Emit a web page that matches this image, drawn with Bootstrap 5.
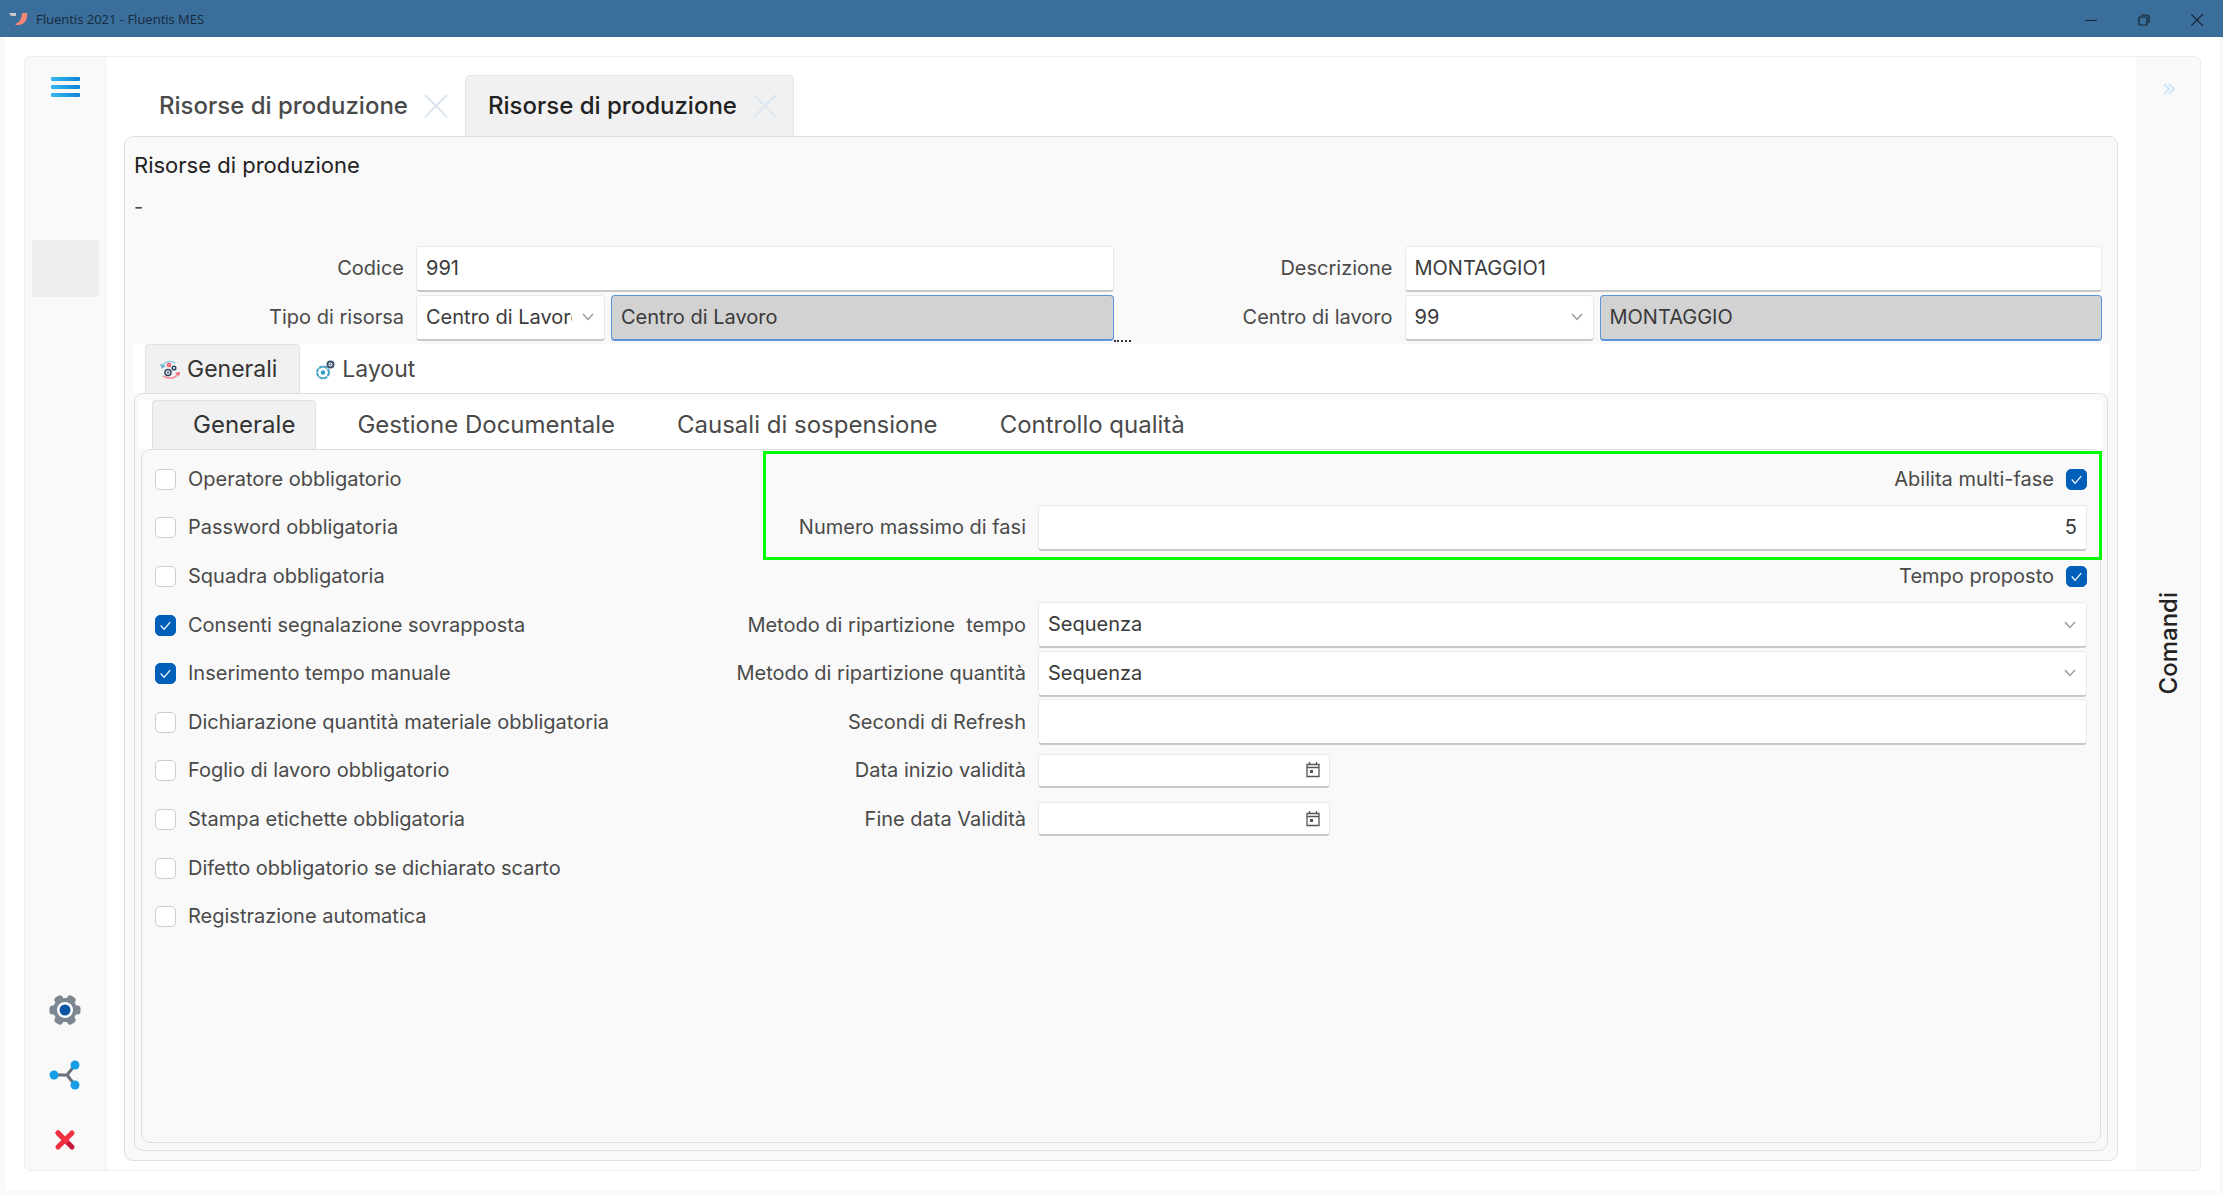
<!DOCTYPE html>
<html lang="it">
<head>
<meta charset="utf-8">
<meta name="viewport" content="width=device-width, initial-scale=1">
<title>Fluentis 2021 - Fluentis MES</title>
<link href="https://cdn.jsdelivr.net/npm/bootstrap@5.3.0/dist/css/bootstrap.min.css" rel="stylesheet">
<style>
body{font-family:Inter,"Noto Sans",sans-serif;font-size:20px;line-height:27px;color:#4a4a4a;background:#f9f9f9}
button,input,select{font:inherit;color:inherit}
.titlebar{height:37px;background:#3a6e9b;color:#172a3c;font:13px/20px "Open Sans",sans-serif;padding-left:9px}
.titlebar button{width:53px;height:37px}
.plain{background:none;border:0;padding:0}
.workspace{background:#fff;margin:0 4px 5px 5px;padding:19px 18px 19px 19px}
.shell{border:1px solid #eee;border-radius:6px;overflow:hidden}
.rail{width:81px;background:#f9f9f9;border-right:1px solid #f0f0f0;padding:18px 0 14px}
.rail-slot{width:67px;height:57px;background:#eee;margin-top:142px}
.rail-btn{height:33px}
.commands{width:64px;background:#f9f9f9;border-left:1px solid #f5f5f5}
.commands-toggle{height:60px}
.commands-label{writing-mode:vertical-rl;transform:rotate(180deg);font-size:24px;line-height:32px;font-weight:500;color:#222}
.content{padding:18px 18px 9px 18px}
.doc-tab{width:329px;height:61px;padding:0 16px 2px 22px;border:1px solid transparent;border-bottom:0;border-radius:5px 5px 0 0;font-size:24px;font-weight:500}
.doc-tab.on{background:#f1f1f1;border-color:#e4e4e4;color:#222}
.pane{border:1px solid #dfdfdf;border-radius:9px;background:#f9f9f9}
.head{height:107px;padding:13px 9px 0}
.head h1{font-size:22px;line-height:30px;font-weight:400;color:#222;margin:0 0 14px}
.head-form{display:grid;grid-template-columns:1fr 1fr;grid-template-rows:1fr 1fr;height:98px;margin:0 15px 2px 0}
.head-form label{flex:0 0 283px;text-align:right}
.head-form .narrow{flex:0 0 189px;margin-right:6px}
.field{height:46px;border:1px solid #e9e9e9;border-bottom:2px solid #c8c8c8;border-radius:4px;background-color:#fff;padding:0 9px;color:#3a3a3a;min-width:0}
select.field{appearance:none;padding-right:32px;background-image:url("data:image/svg+xml,%3Csvg xmlns='http://www.w3.org/2000/svg' width='14' height='14' fill='none' stroke='%23999' stroke-width='1.4'%3E%3Cpath d='M2 4l5 5.500 5-5.500'/%3E%3C/svg%3E");background-repeat:no-repeat;background-position:right 9px center}
.field.locked{background:#d2d2d2;border:1px solid #5c93dd;border-bottom-width:2px}
.dots{right:-17px;bottom:0;width:17px;border-top:2px dotted #333}
.tabstrip{background:#fff;height:49px;padding-left:12px}
.tabstrip button{border:1px solid transparent;border-bottom:0;border-radius:4px 4px 0 0;background:none;height:50px}
.tabstrip button.on{background:#f1f1f1;border-color:#e2e2e2;color:#333}
.outer-tabs button{font-size:23px;padding:0 22px 0 14px;gap:7px}
.inner-tabs{margin-top:6px;padding-left:13px}
.inner-tabs button{font-size:24px;padding:0 20px 2px 40px}
.outer-pane{margin:0 9px 9px}
.inner-pane{margin:0 6px 7px;padding:5px 13px 0 13px}
.opts,.params{display:grid;grid-template-rows:repeat(10,1fr);height:486px}
.opts{width:548px}
.form-check-input{width:21px;height:21px;margin:0;border-color:#ccc;border-radius:4px;flex:none}
.form-check-input:checked{background-color:#005fb8;border-color:#005fb8;background-size:19px;background-image:url("data:image/svg+xml,%3Csvg xmlns='http://www.w3.org/2000/svg' viewBox='0 0 20 20' fill='none' stroke='%23fff' stroke-width='1.300'%3E%3Cpath d='M5 10l3.500 4L15 6.500'/%3E%3C/svg%3E")}
.params .lbl{flex:0 0 327px;text-align:right;white-space:pre}
.callout-frame{left:60px;right:-15px;top:-4px;height:109px;border:3px solid #0f0;pointer-events:none}
.date-box{width:292px;height:34px}
.date-box input{background:none;border:0;outline:0;width:100%}
</style>
<script src="https://cdn.jsdelivr.net/npm/bootstrap@5.3.0/dist/js/bootstrap.bundle.min.js"></script>
</head>
<body class="min-vh-100 d-flex flex-column">
<header class="titlebar d-flex align-items-center">
  <svg width="19" height="18" viewBox="0 0 19 18" class="me-2"><path d="M0 3h7v3H2z" fill="#c7c7cb"/><path d="M13 3h5c1 7-3 13-11 12l-1-1c4-1 7-5 7-11z" fill="#fa8775"/></svg>
  <span class="me-auto">Fluentis 2021 - Fluentis MES</span>
  <button class="plain" aria-label="Riduci"><svg width="12" height="12" stroke="#17222d"><path d="M0 6.500h12"/></svg></button>
  <button class="plain" aria-label="Ripristina"><svg width="12" height="12" fill="none" stroke="#17222d" stroke-width="1.200"><rect x="1" y="3" width="8" height="8" rx="1"/><path d="M3 1h6q2 0 2 2v6"/></svg></button>
  <button class="plain" aria-label="Chiudi"><svg width="12" height="12" stroke="#17222d" stroke-width="1.200"><path d="M0 0l12 12M12 0L0 12"/></svg></button>
</header>
<div class="workspace flex-grow-1 d-flex">
 <div class="shell d-flex flex-grow-1">
  <nav class="rail d-flex flex-column align-items-center flex-shrink-0">
    <button class="plain lh-1" aria-label="Menu"><svg width="29" height="22" viewBox="0 0 29 22"><defs><linearGradient id="cy" x1="0" x2="1"><stop stop-color="#35b9f1"/><stop offset="1" stop-color="#0f83d6"/></linearGradient></defs><g fill="url(#cy)"><rect y="1" width="29" height="4" rx="1"/><rect y="9" width="29" height="4" rx="1"/><rect y="17" width="29" height="4" rx="1"/></g></svg></button>
    <button class="plain rail-slot" aria-label="Modulo"></button>
    <div class="mt-auto d-flex flex-column align-items-center gap-4">
      <button class="plain rail-btn lh-1 mb-2" aria-label="Impostazioni"><svg width="32" height="32" viewBox="-16 -16 32 32"><g fill="#7d8791"><circle r="12"/><rect x="-15.500" y="-4.500" width="31" height="9" rx="3"/><rect x="-15.500" y="-4.500" width="31" height="9" rx="3" transform="rotate(60)"/><rect x="-15.500" y="-4.500" width="31" height="9" rx="3" transform="rotate(120)"/></g><circle r="8" fill="#fff"/><circle r="5.500" fill="#0a56a5"/></svg></button>
      <button class="plain rail-btn lh-1 mb-2" aria-label="Condividi"><svg width="32" height="32" viewBox="0 0 32 32"><path d="M5 16h13L26 6M18 16l8 10" fill="none" stroke="#66717b" stroke-width="3"/><g fill="#159de6"><circle cx="5" cy="16" r="4.500"/><circle cx="26" cy="6" r="4.500"/><circle cx="26" cy="26" r="4.500"/></g></svg></button>
      <button class="plain rail-btn lh-1" aria-label="Esci"><svg width="32" height="32" viewBox="0 0 32 32" stroke-width="5" stroke-linecap="round"><path d="M9 9l14 14" stroke="#c5163a"/><path d="M9 9l8 8M23 9L9 23" stroke="#f12f41"/></svg></button>
    </div>
  </nav>
  <main class="content flex-grow-1 d-flex flex-column">
    <div class="d-flex ps-2 ms-1">
      <div class="doc-tab d-flex align-items-center justify-content-between"><button class="plain text-nowrap">Risorse di produzione</button><button class="plain lh-1" aria-label="Chiudi scheda"><svg width="24" height="24" stroke="#dbe6f0" stroke-width="2"><path d="M1 1l22 22M23 1L1 23"/></svg></button></div>
      <div class="doc-tab on d-flex align-items-center justify-content-between"><button class="plain text-nowrap">Risorse di produzione</button><button class="plain lh-1" aria-label="Chiudi scheda"><svg width="24" height="24" stroke="#dbe6f0" stroke-width="2"><path d="M1 1l22 22M23 1L1 23"/></svg></button></div>
    </div>
    <section class="pane flex-grow-1 d-flex flex-column">
      <div class="head"><h1>Risorse di produzione</h1><div>-</div></div>
      <form class="head-form">
        <div class="d-flex align-items-center"><label class="me-2 pe-1" for="cod">Codice</label><input id="cod" class="field flex-grow-1" value="991"></div>
        <div class="d-flex align-items-center"><label class="me-2 pe-1" for="des">Descrizione</label><input id="des" class="field flex-grow-1" value="MONTAGGIO1"></div>
        <div class="d-flex align-items-center position-relative"><label class="me-2 pe-1" for="tipo">Tipo di risorsa</label><select id="tipo" class="field narrow"><option>Centro di Lavoro</option></select><input class="field locked flex-grow-1" aria-label="Descrizione tipo" value="Centro di Lavoro" readonly><span class="dots position-absolute"></span></div>
        <div class="d-flex align-items-center"><label class="me-2 pe-1" for="cdl">Centro di lavoro</label><select id="cdl" class="field narrow"><option>99</option></select><input class="field locked flex-grow-1" aria-label="Descrizione centro" value="MONTAGGIO" readonly></div>
      </form>
      <div class="outer-tabs tabstrip d-flex mx-2">
        <button class="on d-flex align-items-center"><svg width="20" height="20" viewBox="0 0 20 20" fill="none"><path d="M2 6Q7-1 15 3" stroke="#8fcbe0" stroke-width="1.500"/><path d="M0 4l2 5 4-3z" fill="#6db6d3"/><path d="M20 12l-5 1 4 3z" fill="#f2566c"/><path d="M18 14Q13 21 3 16" stroke="#f58c99" stroke-width="1.500"/><circle cx="9" cy="5" r="1.500" stroke="#ef4b62" stroke-width="1.500"/><circle cx="8" cy="12.500" r="3" stroke="#2c4766" stroke-width="1.500"/><circle cx="8" cy="12.500" r="1" fill="#2c4766"/><circle cx="14" cy="8" r="1.800" stroke="#2c4766" stroke-width="1.500"/></svg>Generali</button>
        <button class="d-flex align-items-center"><svg width="20" height="20" viewBox="0 0 20 20" fill="none"><circle cx="8" cy="12.500" r="6" stroke="#45a5c4" stroke-width="2" stroke-dasharray="3.700 1"/><circle cx="8" cy="12.500" r="5.500" stroke="#45a5c4"/><circle cx="8" cy="12.500" r="2.200" fill="#2f9fc4"/><circle cx="15.500" cy="4.500" r="3" stroke="#3d5069" stroke-width="2"/><circle cx="15.500" cy="4.500" r="1" fill="#3d5069"/></svg>Layout</button>
      </div>
      <div class="pane outer-pane flex-grow-1 d-flex flex-column">
        <div class="inner-tabs tabstrip d-flex mx-1"><button class="on">Generale</button><button>Gestione Documentale</button><button>Causali di sospensione</button><button>Controllo qualità</button></div>
        <form class="pane inner-pane flex-grow-1 d-flex">
          <div class="opts flex-shrink-0">
            <label class="d-flex align-items-center gap-2"><input type="checkbox" class="form-check-input me-1">Operatore obbligatorio</label>
            <label class="d-flex align-items-center gap-2"><input type="checkbox" class="form-check-input me-1">Password obbligatoria</label>
            <label class="d-flex align-items-center gap-2"><input type="checkbox" class="form-check-input me-1">Squadra obbligatoria</label>
            <label class="d-flex align-items-center gap-2"><input type="checkbox" class="form-check-input me-1" checked>Consenti segnalazione sovrapposta</label>
            <label class="d-flex align-items-center gap-2"><input type="checkbox" class="form-check-input me-1" checked>Inserimento tempo manuale</label>
            <label class="d-flex align-items-center gap-2"><input type="checkbox" class="form-check-input me-1">Dichiarazione quantità materiale obbligatoria</label>
            <label class="d-flex align-items-center gap-2"><input type="checkbox" class="form-check-input me-1">Foglio di lavoro obbligatorio</label>
            <label class="d-flex align-items-center gap-2"><input type="checkbox" class="form-check-input me-1">Stampa etichette obbligatoria</label>
            <label class="d-flex align-items-center gap-2"><input type="checkbox" class="form-check-input me-1">Difetto obbligatorio se dichiarato scarto</label>
            <label class="d-flex align-items-center gap-2"><input type="checkbox" class="form-check-input me-1">Registrazione automatica</label>
          </div>
          <div class="params flex-grow-1 position-relative">
            <label class="d-flex align-items-center justify-content-end gap-2"><span class="me-1">Abilita multi-fase</span><input type="checkbox" class="form-check-input" checked></label>
            <div class="d-flex align-items-center"><label class="lbl me-2 pe-1" for="nmax">Numero massimo di fasi</label><input id="nmax" class="field flex-grow-1 text-end" value="5"></div>
            <label class="d-flex align-items-center justify-content-end gap-2"><span class="me-1">Tempo proposto</span><input type="checkbox" class="form-check-input" checked></label>
            <div class="d-flex align-items-center"><label class="lbl me-2 pe-1" for="mt">Metodo di ripartizione  tempo</label><select id="mt" class="field flex-grow-1"><option>Sequenza</option></select></div>
            <div class="d-flex align-items-center"><label class="lbl me-2 pe-1" for="mq">Metodo di ripartizione quantità</label><select id="mq" class="field flex-grow-1"><option>Sequenza</option></select></div>
            <div class="d-flex align-items-center"><label class="lbl me-2 pe-1" for="sr">Secondi di Refresh</label><input id="sr" class="field flex-grow-1"></div>
            <div class="d-flex align-items-center"><label class="lbl me-2 pe-1" for="di">Data inizio validità</label><div class="field date-box d-flex align-items-center"><input id="di"><svg width="14" height="16" viewBox="0 0 14 16" fill="none" stroke="#555" stroke-width="1.300" class="flex-shrink-0"><path d="M1 2.500h12v12H1zM1 5.500h12M3.500 0v3M10.500 0v3"/><path d="M4 8h3v3H4z" fill="#555" stroke="none"/></svg></div></div>
            <div class="d-flex align-items-center"><label class="lbl me-2 pe-1" for="df">Fine data Validità</label><div class="field date-box d-flex align-items-center"><input id="df"><svg width="14" height="16" viewBox="0 0 14 16" fill="none" stroke="#555" stroke-width="1.300" class="flex-shrink-0"><path d="M1 2.500h12v12H1zM1 5.500h12M3.500 0v3M10.500 0v3"/><path d="M4 8h3v3H4z" fill="#555" stroke="none"/></svg></div></div>
            <div class="callout-frame position-absolute"></div>
          </div>
        </form>
      </div>
    </section>
  </main>
  <aside class="commands flex-shrink-0 d-flex flex-column align-items-center">
    <button class="plain commands-toggle lh-1" aria-label="Espandi"><svg width="12" height="12" fill="none" stroke="#cfe6f8" stroke-width="2"><path d="M1 1l5 5-5 5M6 1l5 5-5 5"/></svg></button>
    <div class="commands-label my-auto">Comandi</div>
  </aside>
 </div>
</div>
</body>
</html>
